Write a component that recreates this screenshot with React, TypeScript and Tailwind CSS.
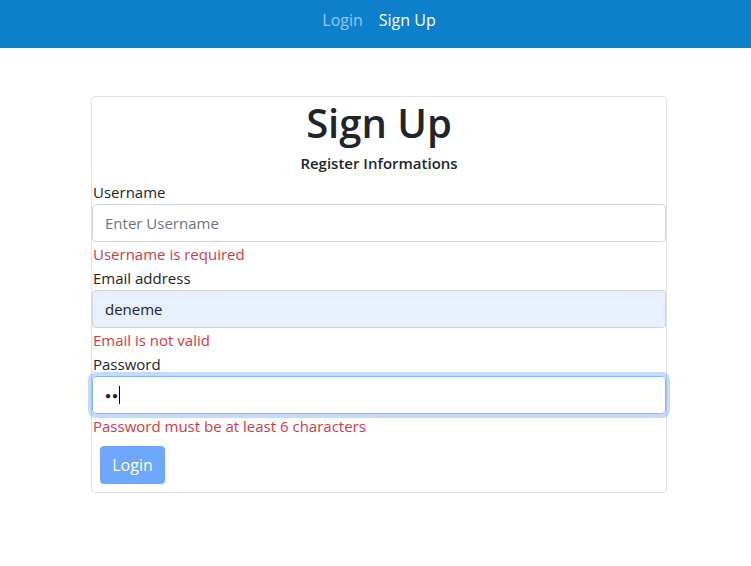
import React from "react";

export default function App() {
  const font = { fontFamily: '"Open Sans", "Noto Sans", sans-serif' };
  return (
    <div className="min-h-[566px] bg-white text-[#212529]" style={font}>
      <nav className="h-[48px] bg-[#0d7fcb] flex items-start pt-[8px] pl-[7px] justify-center gap-[16px] text-[16px] leading-[24px]">
        <span className="text-white/55">Login</span>
        <span className="text-white">Sign Up</span>
      </nav>
      <div className="pt-[48px] pl-[91px]">
        <div className="w-[576px] border border-[#dfe2e6] rounded-[4px] flex flex-col">
          <h1 className="mt-[2px] text-[40px] leading-[48px] font-semibold text-center">Sign Up</h1>
          <h6 className="mt-[4px] text-[15px] leading-[24px] font-semibold text-center">Register Informations</h6>
          <div className="mt-[5px] flex flex-col text-[15px] leading-[24px]">
            <label className="pl-[1px]">Username</label>
            <input
              className="h-[38px] w-full border border-[#ced4da] rounded-[4px] px-[12px] outline-none placeholder:text-[#6c757d]"
              placeholder="Enter Username"
              readOnly
            />
            <div className="text-[#d03a48] pl-[1px]">Username is required</div>
            <label className="pl-[1px]">Email address</label>
            <input
              className="h-[38px] w-full border border-[#ced4da] bg-[#e8f0fe] rounded-[4px] px-[12px] outline-none"
              value="deneme"
              readOnly
            />
            <div className="text-[#d03a48] pl-[1px]">Email is not valid</div>
            <label className="pl-[1px]">Password</label>
            <div className="h-[38px] w-full border border-[#86b7fe] rounded-[4px] px-[12px] flex items-center shadow-[0_0_0_4px_rgba(13,110,253,0.25)]">
              <span className="text-[10px] tracking-[1px]">●●</span>
              <span className="w-[1px] h-[18px] bg-black"></span>
            </div>
            <div className="text-[#d03a48] pl-[1px]">Password must be at least 6 characters</div>
            <div className="p-[8px]">
              <button className="h-[38px] w-[65px] rounded-[4px] bg-[#6ea8fe] text-white text-[16px] font-medium">Login</button>
            </div>
          </div>
        </div>
      </div>
    </div>
  );
}
